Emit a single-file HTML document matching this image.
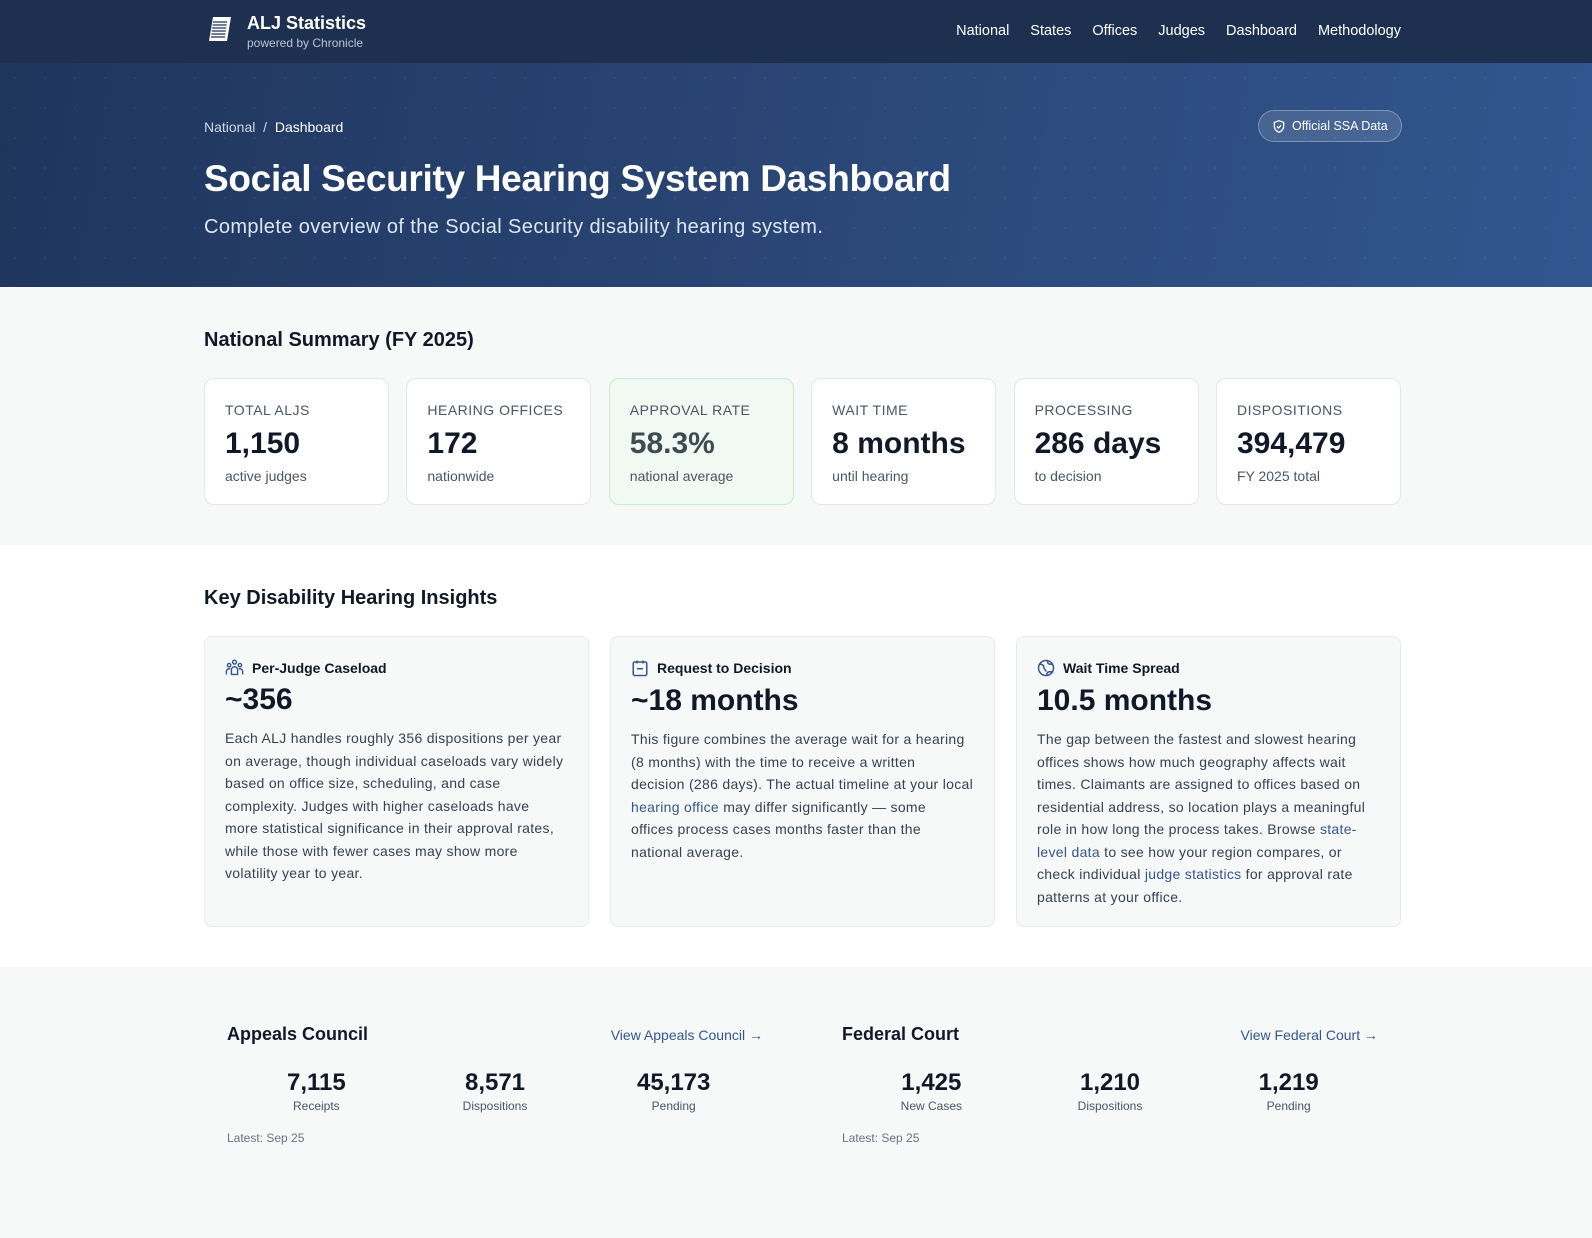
<!DOCTYPE html>
<html><head><meta charset="utf-8">
<style>
*{box-sizing:border-box;margin:0;padding:0}
body{width:1592px;height:1238px;overflow:hidden;font-family:"Liberation Sans",sans-serif;color:#111827;background:#f7f8f8}
.wrap{width:1197px;margin-left:204px;position:relative}
header{height:63px;background:#1e3050;color:#fff;position:relative}
.logo{position:absolute;left:208px;top:13px}
.brand{position:absolute;left:247px;top:12px}
.brand b{font-size:18px;display:block;line-height:22px}
.brand span{font-size:12px;color:#b9c4d8;display:block;margin-top:2px}
nav{position:absolute;right:191px;top:23px;font-size:14.5px}
nav a{color:#fff;text-decoration:none;margin-left:21px}
.hero{height:224px;background:linear-gradient(100deg,#1f355c 0%,#2a4676 50%,#31568f 100%);color:#fff;position:relative;overflow:hidden}
.hero:before{content:"";position:absolute;inset:0;background-image:radial-gradient(rgba(255,255,255,.05) 1px,transparent 1.5px);background-size:30px 30px}
.crumb{position:absolute;left:204px;top:56px;font-size:14px;color:#cfd8e8}
.crumb b{font-weight:normal;color:#fff}
.badge{position:absolute;left:1258px;top:47px;width:144px;height:32px;border:1px solid rgba(255,255,255,.3);background:rgba(255,255,255,.12);border-radius:16px;font-size:12.5px;padding:8px 0 0 33px}
.badge svg{position:absolute;left:13px;top:8px}
.hero h1{position:absolute;left:204px;top:95px;font-size:37px;font-weight:bold;letter-spacing:-.3px}
.hero p{position:absolute;left:204px;top:153px;font-size:20px;color:#dfe6f1;letter-spacing:.4px}
.sum{height:258px;background:#f7f8f8;padding-top:42px}
h2{font-size:20px;font-weight:bold;color:#111827}
.cards{display:flex;gap:17.4px;margin-top:26px}
.card{width:185px;height:127px;background:#fff;border:1px solid #e3e6ea;border-radius:10px;padding:23px 20px}
.card.g{background:#f0f9f2;border-color:#c7ecd1}
.card .l{font-size:14px;color:#4b5563;letter-spacing:.5px}
.card .v{font-size:30px;font-weight:bold;margin-top:8px;line-height:36px}
.card.g .v{color:#3f4b50}
.card .s{font-size:14px;color:#4b5563;margin-top:6px}
.ins{height:422px;background:#fff;padding-top:42px}
.icards{display:flex;gap:21px;margin-top:26px}
.ic{width:385px;height:291px;background:#f7f8f8;border:1px solid #e8eaed;border-radius:8px;padding:22px 20px}
.ic .t{font-size:14px;font-weight:bold;display:flex;align-items:center;gap:8px}
.ic .v{font-size:30px;font-weight:bold;margin-top:6px;line-height:36px}
.ic p{font-size:14px;line-height:22.5px;color:#374151;margin-top:9px;letter-spacing:.3px;white-space:nowrap}
.ic a{color:#34568e;text-decoration:none}
.bot{height:271px;background:#f7f8f8;display:flex;gap:33px;padding-top:57px}
.col{width:582px;padding:0 23px;position:relative}
.col h3{font-size:18px;font-weight:bold}
.col .lk{position:absolute;right:23px;top:3px;font-size:14px;color:#34568e}
.stats{display:flex;margin-top:24px}
.stats div{flex:1;text-align:center}
.stats b{display:block;font-size:24px;line-height:28px}
.stats span{font-size:12px;color:#4b5563}
.lat{font-size:12px;color:#6b7280;margin-top:16px}
</style></head><body>
<header>
<svg class="logo" width="24" height="32" viewBox="0 0 24 32"><path d="M5 4h18l-4 24H1z" fill="#fff"/><g stroke="#1e3050" stroke-width="1.3"><path d="M5 9h14M4.6 12h14M4.2 15h14M3.8 18h14M3.4 21h14M3 24h14"/></g></svg>
<div class="brand"><b>ALJ Statistics</b><span>powered by Chronicle</span></div>
<nav><a>National</a><a>States</a><a>Offices</a><a>Judges</a><a>Dashboard</a><a>Methodology</a></nav>
</header>
<div class="hero">
<div class="crumb">National &nbsp;/&nbsp; <b>Dashboard</b></div>
<div class="badge"><svg width="14" height="15" viewBox="0 0 24 24" fill="none" stroke="#fff" stroke-width="2.2"><path d="M12 2l8 3v6c0 5-3.5 9-8 11-4.5-2-8-6-8-11V5z"/><path d="M8.5 12l2.5 2.5 4.5-4.5"/></svg>Official SSA Data</div>
<h1>Social Security Hearing System Dashboard</h1>
<p>Complete overview of the Social Security disability hearing system.</p>
</div>
<div class="sum"><div class="wrap">
<h2>National Summary (FY 2025)</h2>
<div class="cards">
<div class="card"><div class="l">TOTAL ALJS</div><div class="v">1,150</div><div class="s">active judges</div></div>
<div class="card"><div class="l">HEARING OFFICES</div><div class="v">172</div><div class="s">nationwide</div></div>
<div class="card g"><div class="l">APPROVAL RATE</div><div class="v">58.3%</div><div class="s">national average</div></div>
<div class="card"><div class="l">WAIT TIME</div><div class="v">8 months</div><div class="s">until hearing</div></div>
<div class="card"><div class="l">PROCESSING</div><div class="v">286 days</div><div class="s">to decision</div></div>
<div class="card"><div class="l">DISPOSITIONS</div><div class="v">394,479</div><div class="s">FY 2025 total</div></div>
</div></div></div>
<div class="ins"><div class="wrap">
<h2>Key Disability Hearing Insights</h2>
<div class="icards">
<div class="ic"><div class="t"><svg width="19" height="17" viewBox="0 0 24 22" fill="none" stroke="#34568e" stroke-width="1.8"><circle cx="12" cy="4" r="2.5"/><circle cx="5" cy="8" r="2.2"/><circle cx="19" cy="8" r="2.2"/><path d="M8 20v-6a4 4 0 018 0v6zM1.5 20v-4a3.5 3.5 0 015-3M22.5 20v-4a3.5 3.5 0 00-5-3"/></svg>Per-Judge Caseload</div><div class="v">~356</div><p>Each ALJ handles roughly 356 dispositions per year<br>on average, though individual caseloads vary widely<br>based on office size, scheduling, and case<br>complexity. Judges with higher caseloads have<br>more statistical significance in their approval rates,<br>while those with fewer cases may show more<br>volatility year to year.</p></div>
<div class="ic"><div class="t"><svg width="18" height="18" viewBox="0 0 24 24" fill="none" stroke="#34568e" stroke-width="2"><rect x="3" y="4" width="18" height="18" rx="2"/><path d="M8 2v4M16 2v4M8 13h8"/></svg>Request to Decision</div><div class="v">~18 months</div><p>This figure combines the average wait for a hearing<br>(8 months) with the time to receive a written<br>decision (286 days). The actual timeline at your local<br><a>hearing office</a> may differ significantly — some<br>offices process cases months faster than the<br>national average.</p></div>
<div class="ic"><div class="t"><svg width="18" height="18" viewBox="0 0 24 24" fill="none" stroke="#34568e" stroke-width="2"><circle cx="12" cy="12" r="10"/><path d="M4 7c3 0 5 1 5 4s3 3 3 6M14 3c0 3 2 4 4 4h3M13 21c0-3 2-4 4-4h3"/></svg>Wait Time Spread</div><div class="v">10.5 months</div><p>The gap between the fastest and slowest hearing<br>offices shows how much geography affects wait<br>times. Claimants are assigned to offices based on<br>residential address, so location plays a meaningful<br>role in how long the process takes. Browse <a>state-</a><br><a>level data</a> to see how your region compares, or<br>check individual <a>judge statistics</a> for approval rate<br>patterns at your office.</p></div>
</div></div></div>
<div class="bot"><div class="wrap" style="display:flex;gap:33px">
<div class="col"><h3>Appeals Council</h3><span class="lk">View Appeals Council →</span>
<div class="stats"><div><b>7,115</b><span>Receipts</span></div><div><b>8,571</b><span>Dispositions</span></div><div><b>45,173</b><span>Pending</span></div></div>
<div class="lat">Latest: Sep 25</div></div>
<div class="col"><h3>Federal Court</h3><span class="lk">View Federal Court →</span>
<div class="stats"><div><b>1,425</b><span>New Cases</span></div><div><b>1,210</b><span>Dispositions</span></div><div><b>1,219</b><span>Pending</span></div></div>
<div class="lat">Latest: Sep 25</div></div>
</div></div>
</body></html>
